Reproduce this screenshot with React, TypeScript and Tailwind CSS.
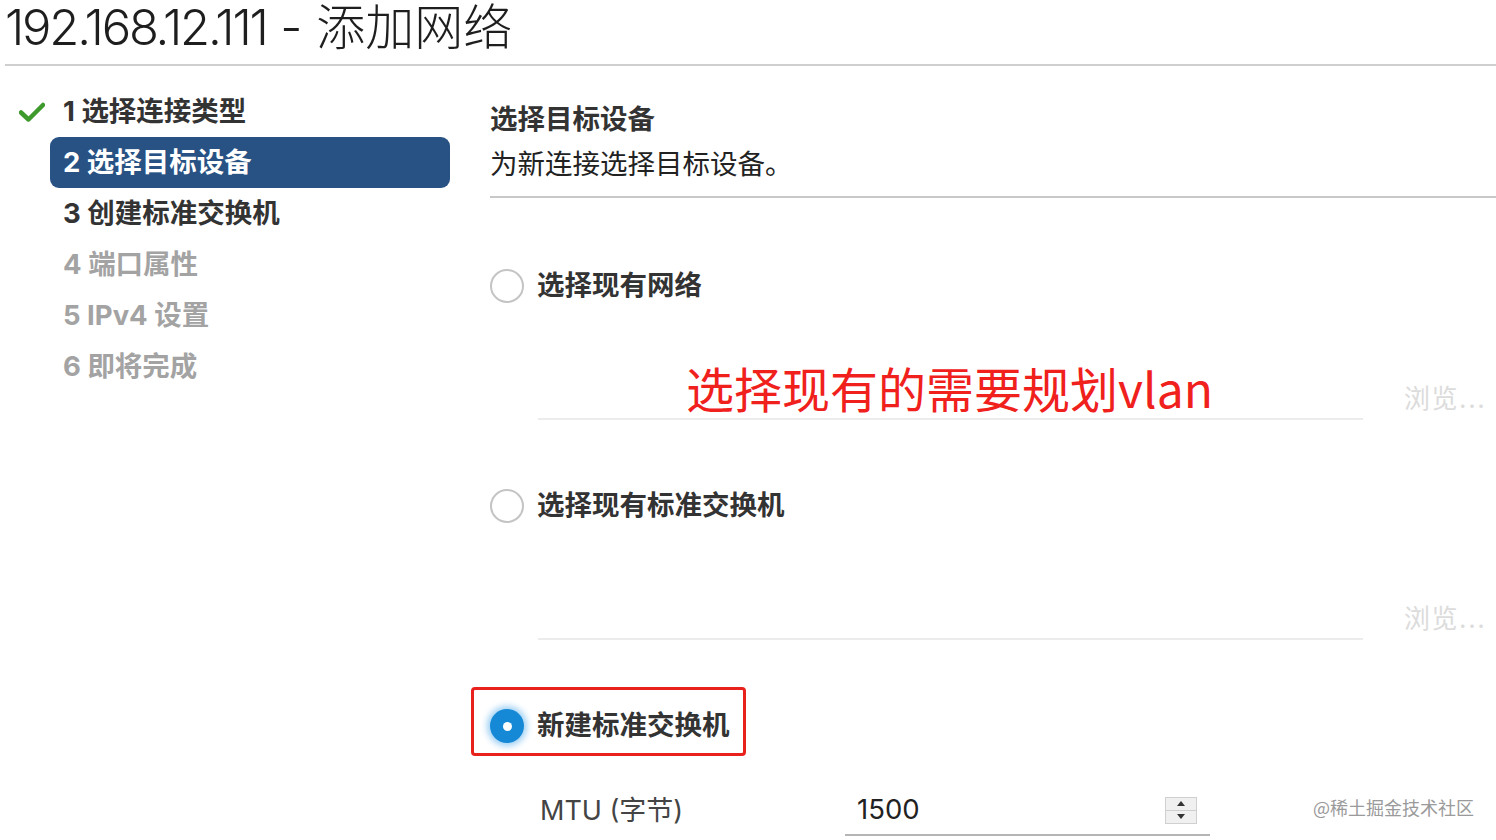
import React from 'react';

const font = { fontFamily: '"Inter", "Noto Sans CJK SC", sans-serif' };

const steps = [
  { n: 1, label: '选择连接类型', state: 'done' },
  { n: 2, label: '选择目标设备', state: 'active' },
  { n: 3, label: '创建标准交换机', state: 'next' },
  { n: 4, label: '端口属性', state: 'todo' },
  { n: 5, label: 'IPv4 设置', state: 'todo' },
  { n: 6, label: '即将完成', state: 'todo' },
];

const Check = () => (
  <svg width="26" height="20" viewBox="0 0 26 20">
    <path d="M2 10.5 L9.5 17.5 L24 3" fill="none" stroke="#3f9a2e" strokeWidth="4.5" strokeLinecap="round" strokeLinejoin="round" />
  </svg>
);

const Radio = ({ checked }: { checked?: boolean }) =>
  checked ? (
    <span className="flex h-[34px] w-[34px] shrink-0 items-center justify-center rounded-full bg-[#1589d6] shadow-[0_0_6px_3px_rgba(40,150,230,0.45)]">
      <span className="h-[9px] w-[9px] rounded-full bg-white" />
    </span>
  ) : (
    <span className="h-[34px] w-[34px] shrink-0 rounded-full border-2 border-[#c4c4c4] bg-white" />
  );

const BrowseRow = () => (
  <div className="ml-[48px] flex h-[44px] items-center">
    <div className="h-full w-[825px] border-b-2 border-[#ececec]" />
    <span className="ml-[41px] text-[26px] tracking-[0.06em] text-[#dcdcdc]">浏览...</span>
  </div>
);

export default function App() {
  return (
    <div className="relative h-[840px] w-[1496px] overflow-hidden bg-white text-[#333]" style={font}>
      {/* Title */}
      <div className="ml-[5px] h-[66px] border-b-2 border-[#cfcfcf]">
        <h1 className="text-[49px] font-light leading-[56px] text-[#1e1e1e]">
          <span className="tracking-[-0.045em]">192.168.12.111</span> - 添加网络
        </h1>
      </div>

      <div className="mt-[20px] flex">
        {/* Steps */}
        <nav className="w-[490px] shrink-0">
          {steps.map((s) => (
            <div key={s.n} className="flex h-[51px] items-center">
              <div className="flex w-[50px] justify-start pl-[19px]">{s.state === 'done' && <Check />}</div>
              <div
                className={
                  'flex h-full w-[400px] items-center rounded-[9px] pl-[13px] text-[27.5px] font-bold ' +
                  (s.state === 'active'
                    ? 'bg-[#275283] text-white'
                    : s.state === 'todo'
                      ? 'text-[#a3a3a3]'
                      : 'text-[#333]')
                }
              >
                {s.n} {s.label}
              </div>
            </div>
          ))}
        </nav>

        {/* Content */}
        <main className="flex-1 pt-[18px]">
          <h2 className="text-[27.5px] font-bold leading-[30px] text-[#333]">选择目标设备</h2>
          <p className="mt-[15px] text-[27.5px] leading-[30px] text-[#222]">为新连接选择目标设备。</p>
          <div className="mt-[17px] border-b-2 border-[#c8c8c8]" />

          <div className="mt-[68px] flex h-[40px] items-center gap-[13px]">
            <Radio />
            <span className="text-[27.5px] font-bold text-[#333]">选择现有网络</span>
          </div>
          <div className="mt-[70px]">
            <BrowseRow />
          </div>

          <div className="mt-[66px] flex h-[40px] items-center gap-[13px]">
            <Radio />
            <span className="text-[27.5px] font-bold text-[#333]">选择现有标准交换机</span>
          </div>
          <div className="mt-[70px]">
            <BrowseRow />
          </div>

          <div className="relative mt-[66px] flex h-[40px] items-center gap-[13px]">
            <Radio checked />
            <span className="text-[27.5px] font-bold text-[#333]">新建标准交换机</span>
            <div className="pointer-events-none absolute left-[-19px] top-[-19px] h-[69px] w-[275px] rounded-[4px] border-[3px] border-[#e8211d]" />
          </div>

          <div className="mt-[40px] flex h-[50px] items-center">
            <span className="ml-[50px] w-[305px] text-[27px] text-[#444]">MTU (字节)</span>
            <div className="flex h-full w-[365px] items-center border-b-2 border-[#b5b5b5] pl-[12px]">
              <span className="flex-1 text-[27.5px] text-[#222]">1500</span>
              <div className="mr-[13px] flex h-[27px] w-[32px] flex-col border border-[#d0d0d0] bg-[#f0f0f0]">
                <div className="flex flex-1 items-center justify-center border-b border-[#cfcfcf]">
                  <span className="h-0 w-0 border-x-[4px] border-b-[5px] border-x-transparent border-b-[#333]" />
                </div>
                <div className="flex flex-1 items-center justify-center">
                  <span className="h-0 w-0 border-x-[4px] border-t-[5px] border-x-transparent border-t-[#333]" />
                </div>
              </div>
            </div>
          </div>
        </main>
      </div>

      {/* Annotation */}
      <div className="absolute left-[686px] top-[356px] text-[48px] leading-[62px] text-[#f0201c]" style={{ fontFamily: '"Noto Sans CJK SC", sans-serif' }}>
        选择现有的需要规划vlan
      </div>

      {/* Watermark */}
      <div className="absolute left-[1313px] top-[794px] text-[18px] text-[#9a9a9a]" style={{ fontFamily: '"Noto Sans CJK SC", sans-serif' }}>
        @稀土掘金技术社区
      </div>
    </div>
  );
}
